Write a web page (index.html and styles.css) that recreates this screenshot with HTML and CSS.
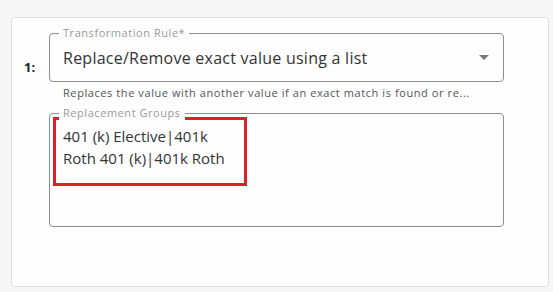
FILE: index.html
```html
<!DOCTYPE html>
<html>

<head>
  <title>Transformation Rule</title>
  <link rel="stylesheet" href="styles.css">
</head>

<body>
  <main class="page">
    <div class="rule-card">
      <div class="rule-index">1:</div>
      <div class="rule-fields">
        <div class="outlined select-box">
          <span class="outlined-label">Transformation Rule*</span>
          <span class="select-value">Replace/Remove exact value using a list</span>
          <span class="select-arrow"></span>
        </div>
        <div class="helper-text">Replaces the value with another value if an exact match is found or re...</div>
        <div class="outlined groups-box">
          <span class="outlined-label">Replacement Groups</span>
          <div class="highlight">
            <div class="group-line">401 (k) Elective|401k</div>
            <div class="group-line">Roth 401 (k)|401k Roth</div>
          </div>
        </div>
      </div>
    </div>
  </main>
</body>

</html>
```

FILE: styles.css
```css
body {
  margin: 0;
  font-family: "Open Sans", Arial, sans-serif;
  background-color: #f7f7f7;
}

.page {
  padding: 17px 4px 0 11px;
}

.rule-card {
  width: 538px;
  height: 270px;
  background-color: #fefefe;
  border: 1px solid #e0e0e0;
  border-radius: 3px;
  display: flex;
  flex-direction: row;
  padding-top: 15px;
  box-sizing: border-box;
}

.rule-index {
  width: 37px;
  padding: 25px 0 0 12px;
  font-size: 13px;
  font-weight: 700;
  color: #222;
  box-sizing: border-box;
}

.rule-fields {
  width: 455px;
  display: flex;
  flex-direction: column;
}

.outlined {
  position: relative;
  border: 1px solid #8e8e8e;
  border-radius: 4px;
  box-sizing: border-box;
}

.outlined-label {
  position: absolute;
  top: -8px;
  left: 9px;
  padding: 0 4px;
  background-color: #fefefe;
  font-size: 11px;
  line-height: 14px;
  letter-spacing: 0.55px;
  color: #9a9a9a;
}

.select-box {
  height: 49px;
  display: flex;
  align-items: center;
  padding: 0 14px 0 13px;
}

.select-value {
  flex: 1;
  font-size: 16px;
  letter-spacing: 0.25px;
  color: #333;
}

.select-arrow {
  width: 0;
  height: 0;
  border-left: 5px solid transparent;
  border-right: 5px solid transparent;
  border-top: 5px solid #777;
}

.helper-text {
  font-size: 11px;
  line-height: 14px;
  letter-spacing: 0.58px;
  color: #555;
  padding: 4px 0 0 14px;
  height: 31px;
  box-sizing: border-box;
}

.groups-box {
  height: 114px;
  padding: 3px 0 0 3px;
}

.highlight {
  width: 194px;
  height: 69px;
  border: 3px solid #e31e24;
  box-sizing: border-box;
  padding: 5px 0 0 7px;
}

.group-line {
  font-size: 15px;
  line-height: 22px;
  color: #333;
  white-space: nowrap;
}
```
